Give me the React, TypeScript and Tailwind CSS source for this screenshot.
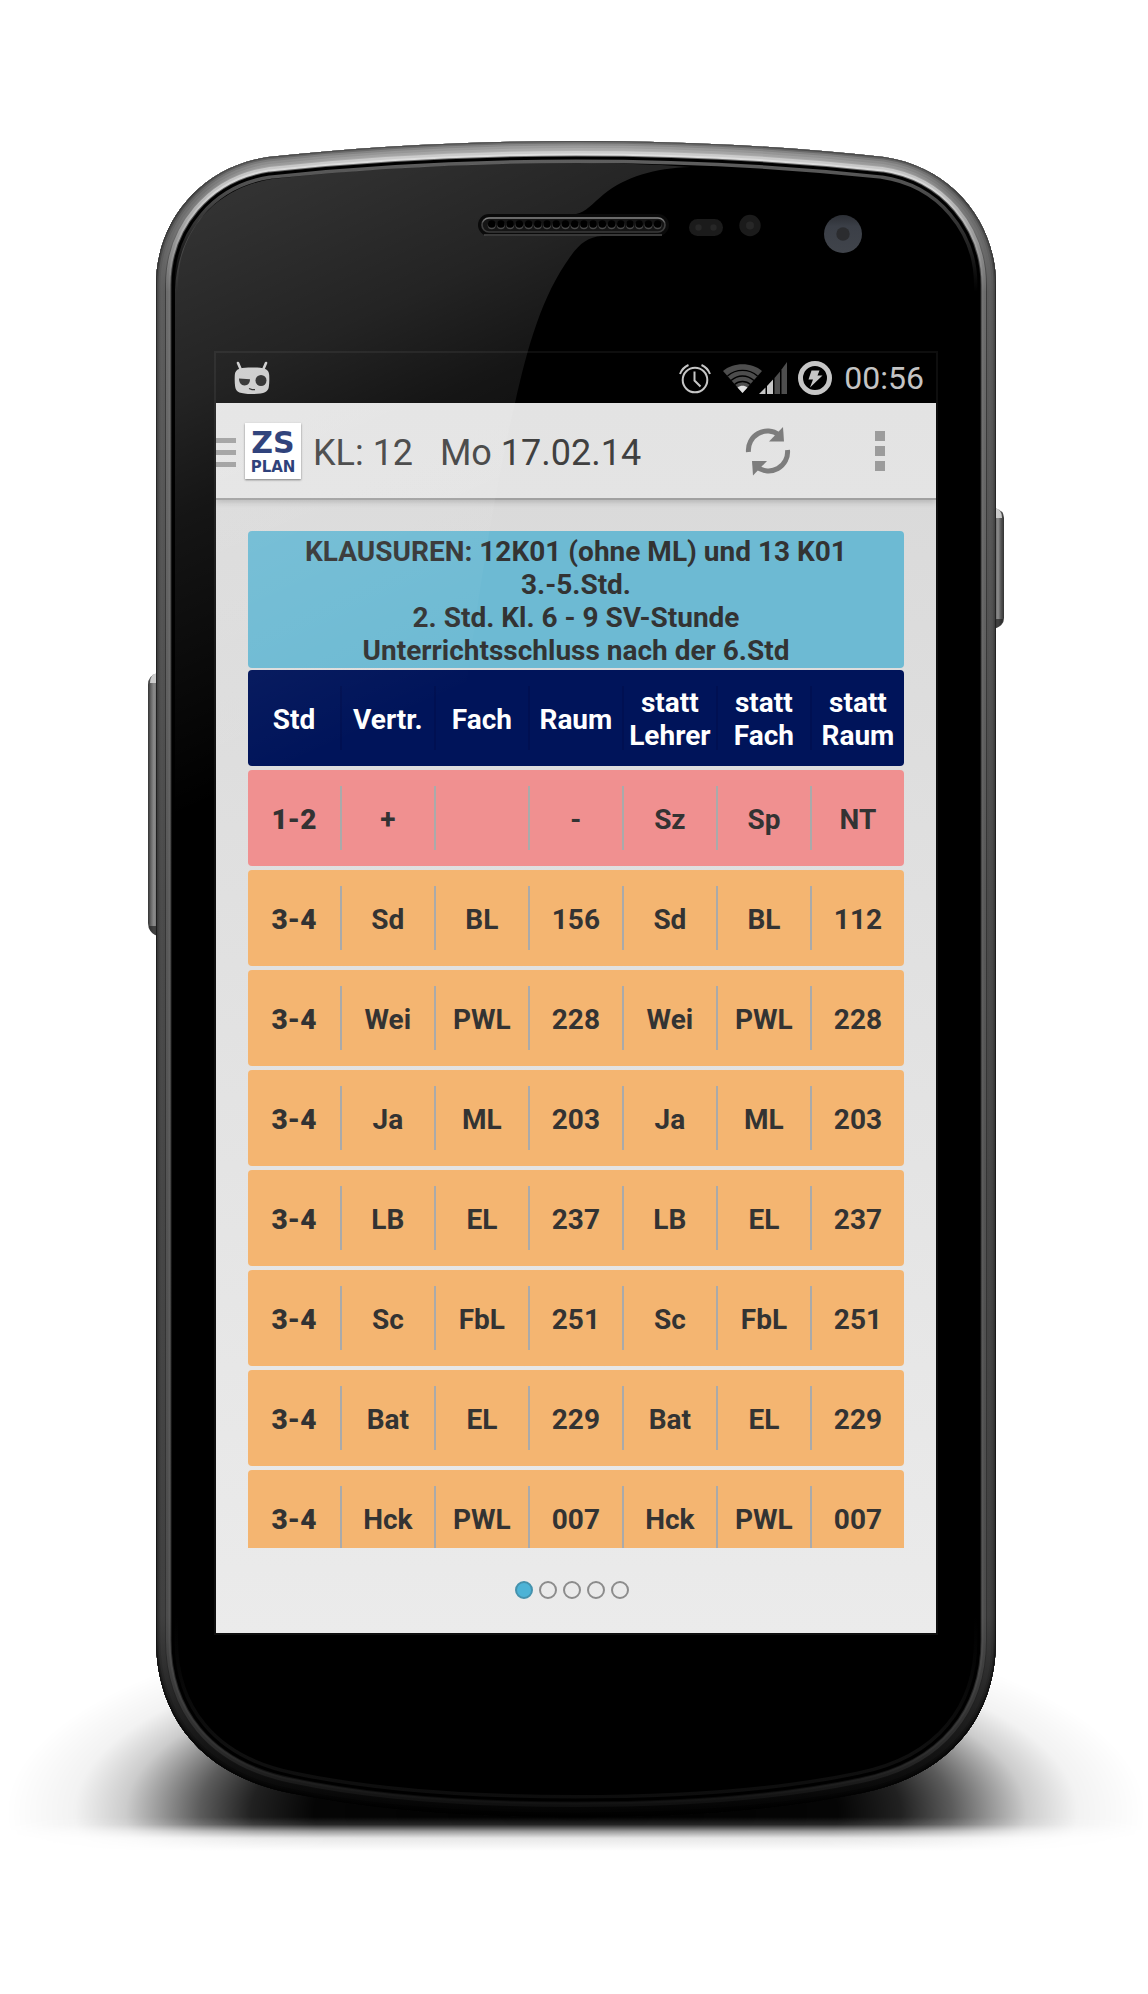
import React from "react";

type Row = { tone: string; cells: string[] };

const RED = "bg-[#f09090]";
const ORANGE = "bg-[#f4b571]";

const HEADINGS = ["Std", "Vertr.", "Fach", "Raum", "statt Lehrer", "statt Fach", "statt Raum"];

const ROWS: Row[] = [
  { tone: RED, cells: ["1-2", "+", "", "-", "Sz", "Sp", "NT"] },
  { tone: ORANGE, cells: ["3-4", "Sd", "BL", "156", "Sd", "BL", "112"] },
  { tone: ORANGE, cells: ["3-4", "Wei", "PWL", "228", "Wei", "PWL", "228"] },
  { tone: ORANGE, cells: ["3-4", "Ja", "ML", "203", "Ja", "ML", "203"] },
  { tone: ORANGE, cells: ["3-4", "LB", "EL", "237", "LB", "EL", "237"] },
  { tone: ORANGE, cells: ["3-4", "Sc", "FbL", "251", "Sc", "FbL", "251"] },
  { tone: ORANGE, cells: ["3-4", "Bat", "EL", "229", "Bat", "EL", "229"] },
  { tone: ORANGE, cells: ["3-4", "Hck", "PWL", "007", "Hck", "PWL", "007"] },
];

const BODY =
  "M156 285C156 222 200 167 268 157C370 146 470 141 576 141C682 141 782 146 884 157C952 167 996 222 996 285V1640C996 1715 952 1775 862 1793C772 1812 672 1817 576 1817C480 1817 380 1812 290 1793C200 1775 156 1715 156 1640Z";

/* Rings of the metal rim, outermost last; each is a stroke clipped to the body. */
const RIM: [number, string][] = [
  [44, "url(#glassEdge)"],
  [37, "#000"],
  [31, "url(#rimInner)"],
  [29, "url(#rimShine)"],
  [25, "url(#rimShine2)"],
  [20, "url(#rimGroove)"],
  [18, "url(#rim4)"],
  [14, "url(#rim3)"],
  [9, "url(#rim2)"],
  [5, "url(#rim1)"],
  [2, "url(#rim0)"],
];

function VGrad({ id, stops }: { id: string; stops: string[] }) {
  const at = [0, 0.03, 0.09, 0.45, 0.88, 0.96, 1];
  return (
    <linearGradient id={id} gradientUnits="userSpaceOnUse" x1="0" y1="141" x2="0" y2="1817">
      {stops.map((c, i) => (
        <stop key={i} offset={at[i]} stopColor={c} />
      ))}
    </linearGradient>
  );
}

function PhoneBody() {
  return (
    <svg
      aria-hidden="true"
      viewBox="0 0 1148 1994"
      className="pointer-events-none absolute -left-[216px] -top-[353px] h-[1994px] w-[1148px] max-w-none"
    >
      <defs>
        <clipPath id="bodyClip">
          <path d={BODY} />
        </clipPath>
        <VGrad id="glassEdge" stops={["#6a6a6a", "#4c4c4c", "#000", "#000", "#000", "#101010", "#0c0c0c"]} />
        <VGrad id="rimInner" stops={["#777", "#555", "#333", "#2c2c2c", "#2a2a2a", "#181818", "#060606"]} />
        <VGrad id="rimShine" stops={["#e2e2e2", "#d4d4d4", "#747474", "#606060", "#565656", "#303030", "#0c0c0c"]} />
        <VGrad id="rimShine2" stops={["#d0d0d0", "#c0c0c0", "#6c6c6c", "#585858", "#4c4c4c", "#2a2a2a", "#0a0a0a"]} />
        <VGrad id="rimGroove" stops={["#b8b8b8", "#8c8c8c", "#3c3c3c", "#363636", "#333", "#161616", "#030303"]} />
        <VGrad id="rim4" stops={["#b0b0b0", "#808080", "#5c5c5c", "#4a4a4a", "#404040", "#141414", "#030303"]} />
        <VGrad id="rim3" stops={["#a0a0a0", "#747474", "#5e5e5e", "#4c4c4c", "#404040", "#141414", "#020202"]} />
        <VGrad id="rim2" stops={["#8c8c8c", "#666", "#585858", "#484848", "#3a3a3a", "#0f0f0f", "#000"]} />
        <VGrad id="rim1" stops={["#707070", "#505050", "#484848", "#3a3a3a", "#2e2e2e", "#0a0a0a", "#000"]} />
        <VGrad id="rim0" stops={["#505050", "#3c3c3c", "#2a2a2a", "#1e1e1e", "#161616", "#050505", "#000"]} />
        <radialGradient
          id="floor"
          gradientUnits="userSpaceOnUse"
          cx="0"
          cy="0"
          r="1"
          gradientTransform="translate(576 1812) scale(570 205)"
        >
          <stop offset="0" stopOpacity="1" />
          <stop offset=".46" stopOpacity=".98" />
          <stop offset=".57" stopOpacity=".87" />
          <stop offset=".66" stopOpacity=".64" />
          <stop offset=".73" stopOpacity=".4" />
          <stop offset=".79" stopOpacity=".2" />
          <stop offset=".88" stopOpacity=".05" />
          <stop offset="1" stopOpacity="0" />
        </radialGradient>
        <linearGradient id="fade" gradientUnits="userSpaceOnUse" x1="0" y1="1817" x2="0" y2="1851">
          <stop offset="0" stopColor="#fff" />
          <stop offset=".22" stopColor="#ddd" />
          <stop offset=".42" stopColor="#666" />
          <stop offset=".62" stopColor="#181818" />
          <stop offset="1" stopColor="#000" />
        </linearGradient>
        <mask id="fadeMask" maskUnits="userSpaceOnUse" x="0" y="1600" width="1148" height="300">
          <rect x="0" y="1600" width="1148" height="300" fill="url(#fade)" />
        </mask>
        <linearGradient id="keyL" x1="0" x2="1" y1="0" y2="0">
          <stop offset="0" stopColor="#333" />
          <stop offset=".3" stopColor="#666" />
          <stop offset=".6" stopColor="#8c8c8c" />
          <stop offset="1" stopColor="#6a6a6a" />
        </linearGradient>
        <linearGradient id="keyR" x1="1" x2="0" y1="0" y2="0">
          <stop offset="0" stopColor="#333" />
          <stop offset=".3" stopColor="#555" />
          <stop offset=".6" stopColor="#8c8c8c" />
          <stop offset="1" stopColor="#5a5a5a" />
        </linearGradient>
        <linearGradient id="lens" x1="0" x2="0" y1="0" y2="1">
          <stop offset="0" stopColor="#2c2f35" />
          <stop offset=".3" stopColor="#3b3f47" />
          <stop offset="1" stopColor="#40444b" />
        </linearGradient>
      </defs>

      <rect x="0" y="1600" width="1148" height="260" fill="url(#floor)" mask="url(#fadeMask)" />

      {/* side keys */}
      <path d="M158 673Q148 675 148 685V923Q148 933 158 936Z" fill="url(#keyL)" />
      <path d="M158 673Q150 674 150 683H158Z" fill="#ccc" />
      <path d="M158 936Q150 934 149 926H158Z" fill="#222" opacity=".7" />
      <path d="M994 508Q1004 510 1004 518V618Q1004 626 994 629Z" fill="url(#keyR)" />
      <path d="M994 508Q1002 509 1002 518H994Z" fill="#ccc" />
      <path d="M994 629Q1003 626 1003 619H994Z" fill="#222" opacity=".7" />

      <path d={BODY} fill="#000" />
      <g clipPath="url(#bodyClip)" fill="none">
        {RIM.map(([w, paint]) => (
          <path key={w} d={BODY} stroke={paint} strokeWidth={w} />
        ))}
      </g>

      <rect x="215" y="352" width="722" height="1282" fill="none" stroke="#0e0e0e" strokeWidth="2" />
    </svg>
  );
}

/* Glass reflection and the parts set into the glass; it lies over the display. */
function PhoneGlass() {
  return (
    <svg
      aria-hidden="true"
      viewBox="0 0 1148 1994"
      className="pointer-events-none absolute -left-[216px] -top-[353px] h-[1994px] w-[1148px] max-w-none"
    >
      <defs>
        <linearGradient id="gloss" gradientUnits="userSpaceOnUse" x1="250" y1="180" x2="475" y2="685">
          <stop offset="0" stopColor="#fff" stopOpacity=".2" />
          <stop offset=".31" stopColor="#fff" stopOpacity=".14" />
          <stop offset=".5" stopColor="#fff" stopOpacity=".085" />
          <stop offset="1" stopColor="#fff" stopOpacity="0" />
        </linearGradient>
        <linearGradient id="grille" x1="0" x2="0" y1="0" y2="1">
          <stop offset="0" stopColor="#8a8a8a" />
          <stop offset=".4" stopColor="#444" />
          <stop offset="1" stopColor="#3a3a3a" />
        </linearGradient>
      </defs>
      <path
        d="M175 290C177 232 215 188 272 179C370 168 470 163 576 163C615 163 650 164 690 167C655 168 625 177 604 194C592 204 586 212 576 214V236H602C588 237 580 243 570 257C542 296 528 345 515 403C490 510 470 640 440 900H175Z"
        fill="url(#gloss)"
      />

      <rect x="478" y="214" width="191" height="22" rx="11" fill="#0a0a0a" />
      <path d="M484 235H662" stroke="#484848" strokeWidth="1.5" />
      <rect x="482" y="218" width="183" height="14" rx="7" fill="#151515" stroke="url(#grille)" strokeWidth="1.6" />
      {Array.from({ length: 19 }, (_, i) => (
        <g key={i}>
          <circle cx={491.7 + i * 9.22} cy="225.2" r="4" fill="#4a4a4a" />
          <circle cx={491.7 + i * 9.22} cy="224" r="3.8" fill="#000" />
        </g>
      ))}

      <rect x="689" y="219" width="34" height="17" rx="8.5" fill="#1b1b1b" />
      <circle cx="698.5" cy="227.5" r="3.2" fill="#272727" />
      <circle cx="713.5" cy="227.5" r="3.2" fill="#272727" />
      <circle cx="750" cy="225.5" r="10.7" fill="#1b1b1b" />
      <circle cx="750" cy="225.5" r="4" fill="#272727" />
      <circle cx="843" cy="234" r="19" fill="url(#lens)" />
      <circle cx="843" cy="234" r="6.7" fill="#2b2c2f" />
    </svg>
  );
}

function RobotIcon() {
  return (
    <svg viewBox="0 0 36 34" className="h-[34px] w-9" aria-hidden="true">
      <path d="M4 2L7 9M32 2L29 9" stroke="#c8c8c8" strokeWidth="2.6" strokeLinecap="round" />
      <path
        d="M18 6.5C28 6.5 35 7 35.2 14C35.4 18 35.4 22 34.8 26C34 31 30 33 18 33C6 33 2 31 1.2 26C.6 22 .6 18 .8 14C1 7 8 6.5 18 6.5Z"
        fill="#c8c8c8"
      />
      <path d="M5 17.5L16 18.3C16 22 14 24.5 10.5 24.5C7 24.5 5 21.5 5 17.5Z" fill="#1b1b1b" />
      <circle cx="27" cy="19.5" r="5.5" fill="#1b1b1b" />
      <path d="M15 27.5L18 28.6L21 28.6" stroke="#1b1b1b" strokeWidth="1.3" fill="none" />
    </svg>
  );
}

function AlarmIcon() {
  return (
    <svg viewBox="0 0 32 32" className="h-8 w-8" fill="none" stroke="#c6c6c6" aria-hidden="true">
      <circle cx="16" cy="18" r="12.3" strokeWidth="2" />
      <path d="M15.5 9.5V18.5L21.5 24.5" strokeWidth="2" />
      <path d="M1 12C2.5 8 5 5 9.5 3M31 12C29.5 8 27 5 22.5 3" strokeWidth="2" />
    </svg>
  );
}

function SignalIcon() {
  return (
    <svg viewBox="0 0 64 32" className="h-8 w-16" aria-hidden="true">
      <path d="M0 9C10 0 29 0 39 9L19.5 31Z" fill="#4d4d4d" />
      <g fill="none" stroke="#000" strokeWidth="1.4">
        <path d="M4.5 14C13 6.5 26 6.5 34.5 14" />
        <path d="M8 18.5C15 12.5 24 12.5 31 18.5" />
        <path d="M11.5 22.5C16 18.5 23 18.5 27.5 22.5" />
      </g>
      <path d="M14.5 25.5C17.5 23.2 21.5 23.2 24.5 25.5L19.5 31Z" fill="#e0e0e0" />
      <path d="M36 32L42.5 25.5V32Z" fill="#c6c6c6" />
      <path d="M44 24L50 17.5V32H44Z" fill="#c6c6c6" />
      <path d="M51.5 16L57 9.5V32H51.5Z" fill="#4d4d4d" />
      <path d="M58.5 7.5L64 0V32H58.5Z" fill="#4d4d4d" />
    </svg>
  );
}

function ChargeIcon() {
  return (
    <svg viewBox="0 0 34 34" className="h-[34px] w-[34px]" aria-hidden="true">
      <circle cx="17" cy="17" r="14.5" fill="none" stroke="#c6c6c6" strokeWidth="5" />
      <path d="M13.5 9.5H21.5L19.5 14.5H24.5L12 26.5L15 18.5H10.5Z" fill="#c6c6c6" />
    </svg>
  );
}

function RefreshIcon() {
  return (
    <svg viewBox="0 0 46 50" className="h-[50px] w-[46px]" aria-hidden="true">
      <path d="M3.5 26A19 19 0 0 1 34 9" fill="none" stroke="#7d7d7d" strokeWidth="5" />
      <path d="M38 1L39 15.5H24Z" fill="#7d7d7d" />
      <path d="M42.5 24A19 19 0 0 1 12 41" fill="none" stroke="#7d7d7d" strokeWidth="5" />
      <path d="M8 49.5L7 35H22Z" fill="#7d7d7d" />
    </svg>
  );
}

function StatusBar() {
  return (
    <div className="flex h-[50px] shrink-0 items-center bg-black pl-[18px] pr-3 text-[32px] leading-[50px] text-[#c4c4c4]">
      <RobotIcon />
      <div className="ml-auto flex items-center">
        <AlarmIcon />
        <span className="ml-3">
          <SignalIcon />
        </span>
        <span className="ml-[11px] mr-3">
          <ChargeIcon />
        </span>
        <span>00:56</span>
      </div>
    </div>
  );
}

function ActionBar() {
  return (
    <header className="relative flex h-[97px] shrink-0 items-center border-b-2 border-[#a0a0a0] bg-linear-to-b from-[#e3e3e3] to-[#e4e4e4] shadow-[0_2px_6px_rgba(0,0,0,0.18)]">
      <button type="button" aria-label="Menü öffnen" className="flex items-center">
        <span className="flex w-5 flex-col gap-[7px] pt-1">
          <span className="h-[5px] bg-[#9c9c9c]" />
          <span className="h-[5px] bg-[#9c9c9c]" />
          <span className="h-[5px] bg-[#9c9c9c]" />
        </span>
        <svg
          viewBox="0 0 56 56"
          className="ml-[9px] h-14 w-14 bg-white shadow-[0_1px_2px_rgba(0,0,0,0.5)]"
          fill="#1a2f6e"
          fontFamily='"DejaVu Sans", sans-serif'
          fontWeight="700"
          textAnchor="middle"
        >
          <text x="28" y="30" fontSize="30">ZS</text>
          <text x="28" y="49" fontSize="15">PLAN</text>
        </svg>
      </button>
      <h1 className="ml-3 whitespace-pre pt-1 text-[36px] font-normal text-[#404040]">KL: 12   Mo 17.02.14</h1>
      <div className="ml-auto flex items-center gap-[84px] pr-[51px]">
        <button type="button" aria-label="Aktualisieren">
          <RefreshIcon />
        </button>
        <button type="button" aria-label="Weitere Optionen" className="flex flex-col gap-[5px]">
          <span className="h-2.5 w-2.5 bg-[#9c9c9c]" />
          <span className="h-2.5 w-2.5 bg-[#9c9c9c]" />
          <span className="h-2.5 w-2.5 bg-[#9c9c9c]" />
        </button>
      </div>
    </header>
  );
}

function Plan() {
  return (
    <div className="min-h-0 flex-1 overflow-y-auto text-center text-[28px] font-bold leading-[33px] text-[#333] [scrollbar-width:none]">
      <p className="rounded bg-[#6dbad3] px-4 pb-px pt-1">
        KLAUSUREN: 12K01 (ohne ML) und 13 K01
        <br />
        3.-5.Std.
        <br />
        2. Std. Kl. 6 - 9 SV-Stunde
        <br />
        Unterrichtsschluss nach der 6.Std
      </p>
      <table className="-mt-0.5 w-full table-fixed border-separate border-spacing-x-0 border-spacing-y-1">
        <colgroup>
          <col className="w-[14%]" />
          <col span={6} />
        </colgroup>
        <thead className="text-white">
          <tr>
            {HEADINGS.map((h, i) => (
              <th key={i} scope="col" className="h-24 bg-[#00145a] p-0 first:rounded-l last:rounded-r">
                <div className={"flex h-16 items-center justify-center pt-0.5" + (i ? " border-l-2 border-[#001052]" : "")}>
                  <span>
                    {h.split(" ").map((word, n) => (
                      <span key={n} className="block">
                        {word}
                      </span>
                    ))}
                  </span>
                </div>
              </th>
            ))}
          </tr>
        </thead>
        <tbody>
          {ROWS.map((row, r) => (
            <tr key={r}>
              {row.cells.map((cell, i) => (
                <td key={i} className={row.tone + " h-24 p-0 first:rounded-l first:font-black last:rounded-r"}>
                  <div className={"flex h-16 items-center justify-center pt-0.5" + (i ? " border-l-2 border-[#aaa]" : "")}>
                    {cell}
                  </div>
                </td>
              ))}
            </tr>
          ))}
        </tbody>
      </table>
    </div>
  );
}

function Pager() {
  return (
    <nav aria-label="Seiten" className="flex h-[85px] shrink-0 items-center justify-center gap-1.5 pb-0.5 pr-2">
      {[1, 2, 3, 4, 5].map((n) => (
        <button
          key={n}
          type="button"
          aria-label={"Seite " + n}
          className={
            "h-[18px] w-[18px] rounded-full border-2 " +
            (n === 1 ? "border-[#4592ad] bg-[#4db3d6]" : "border-[#8c8c8c]")
          }
        />
      ))}
    </nav>
  );
}

export default function App() {
  return (
    <main className="flex min-h-screen justify-center overflow-hidden bg-white pb-[361px] pl-1 pt-[353px] font-[Roboto,sans-serif]">
      <div className="relative w-full max-w-[720px]">
        <PhoneBody />
        <div className="relative flex h-[1280px] flex-col bg-linear-to-b from-[#d8d8d8] to-[#ebebeb]">
          <StatusBar />
          <ActionBar />
          <div className="flex min-h-0 flex-1 flex-col px-8 pt-[31px]">
            <Plan />
            <Pager />
          </div>
        </div>
        <PhoneGlass />
      </div>
    </main>
  );
}
